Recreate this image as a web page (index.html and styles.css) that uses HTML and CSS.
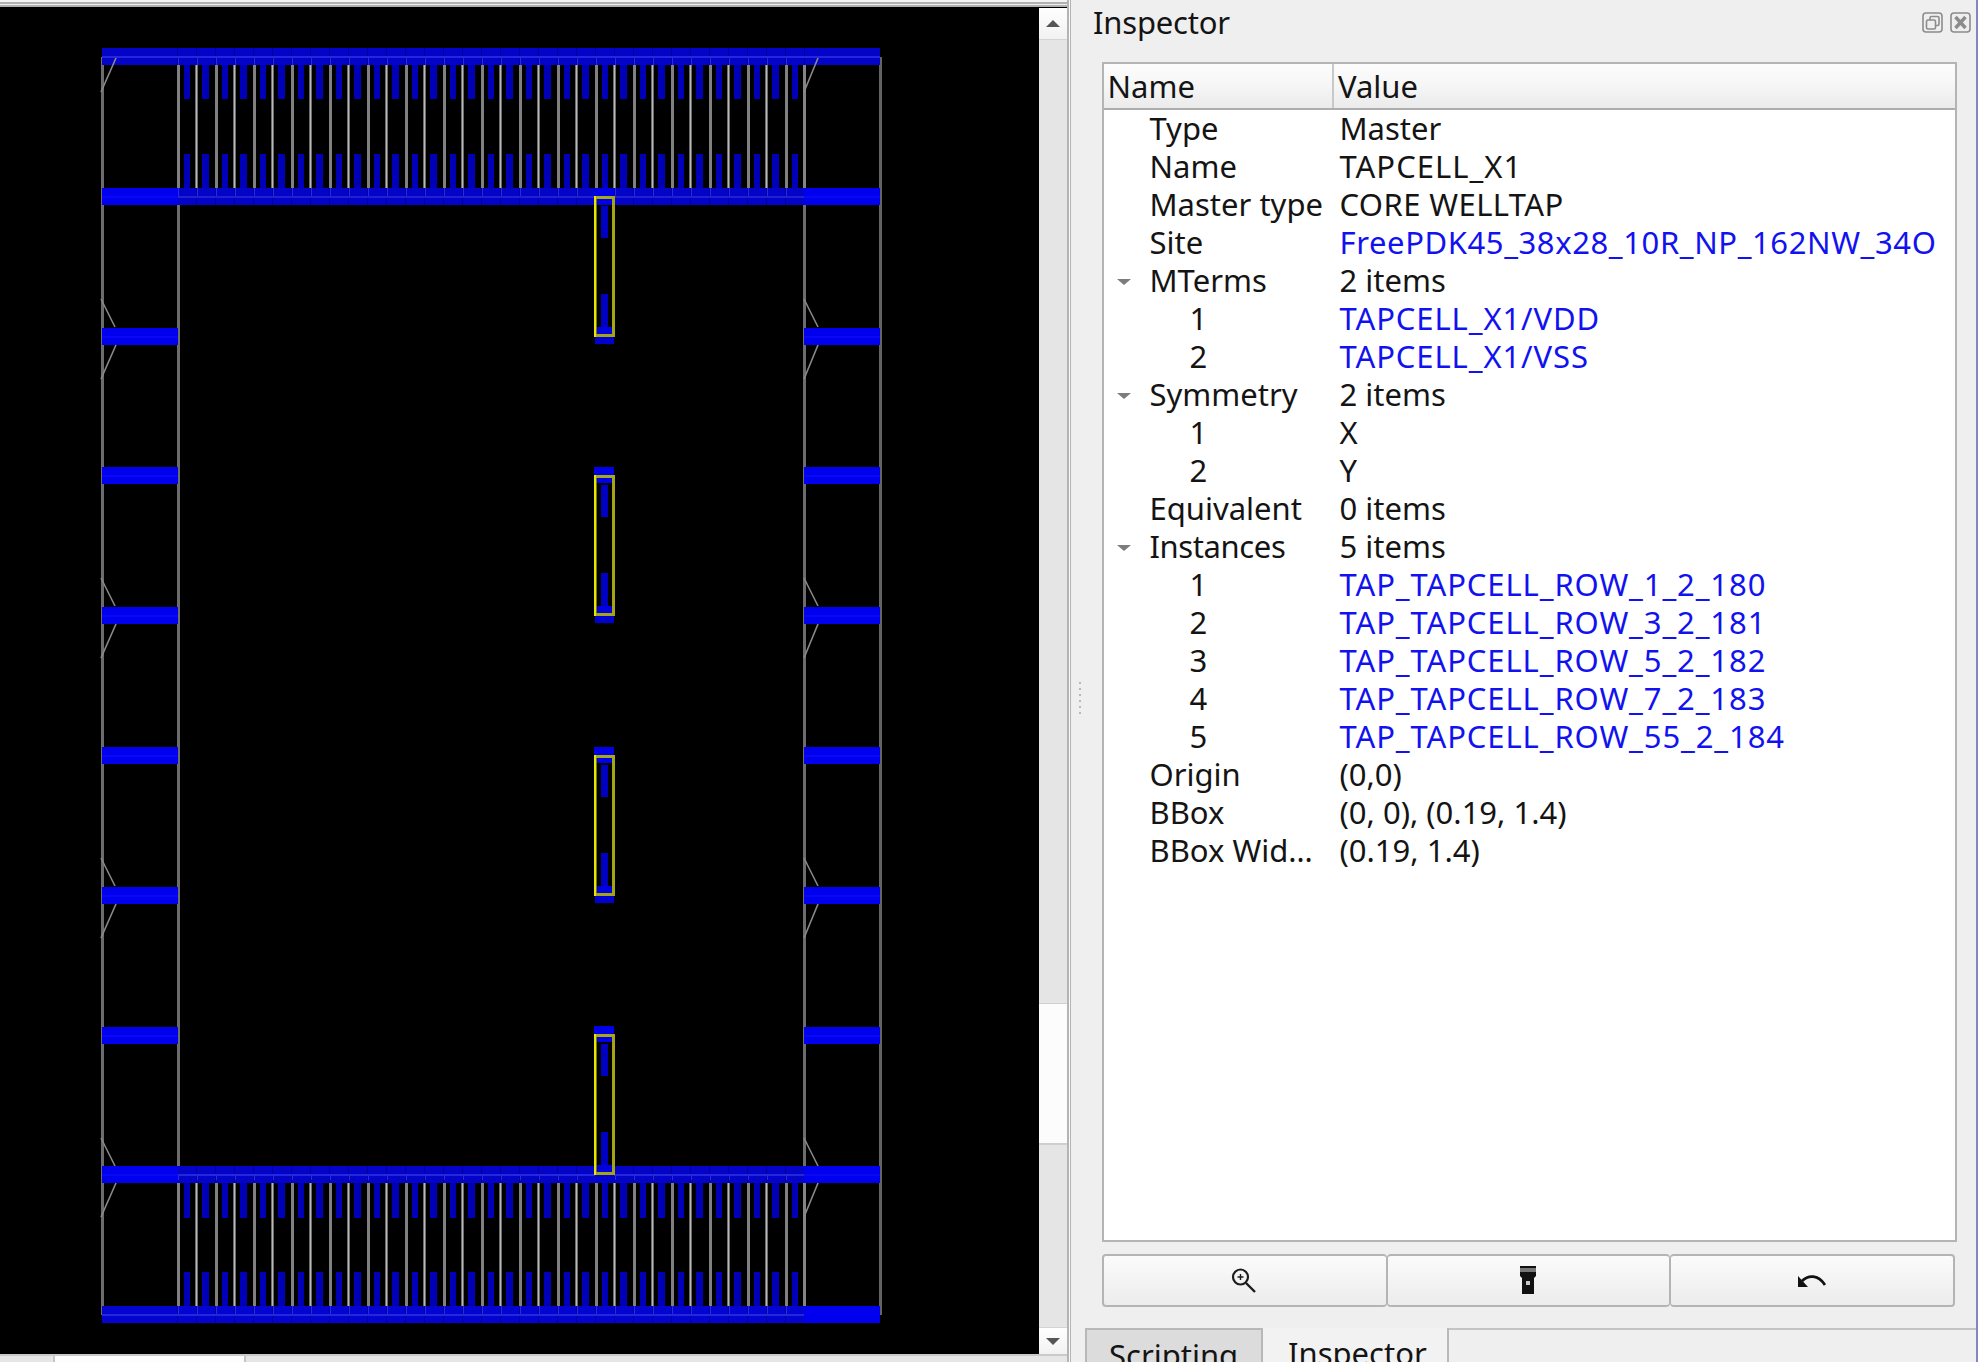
FILE: index.html
```html
<!DOCTYPE html>
<html lang="en">
<head>
<meta charset="utf-8">
<title>Inspector</title>
<link rel="stylesheet" href="styles.css">
</head>
<body>
<div class="app">
  <section class="layout-pane">
    <div class="layout-top">
      <svg class="layout" viewBox="0 0 1039 1346" width="1039" height="1346" shape-rendering="crispEdges">
        <defs>
          <pattern id="cellLines" patternUnits="userSpaceOnUse" x="177" y="0" width="38" height="10">
            <rect x="0" width="3" height="10" fill="#808080"/>
            <rect x="18" width="3" height="10" fill="#6c6c6c"/>
            <rect x="19" width="1" height="10" fill="#b8b8b8"/>
          </pattern>
          <pattern id="cellPins" patternUnits="userSpaceOnUse" x="184" y="0" width="38" height="10">
            <rect x="0" width="6" height="10" fill="#0000b8"/>
            <rect x="18" width="7" height="10" fill="#0000b8"/>
          </pattern>
          <pattern id="cellEdges" patternUnits="userSpaceOnUse" x="177" y="0" width="19" height="10">
            <rect x="0" width="1" height="10" fill="#0000a0"/>
          </pattern>
          <pattern id="cellMarks" patternUnits="userSpaceOnUse" x="178" y="0" width="19" height="10">
            <rect x="0" width="1" height="10" fill="#2a2ae0"/>
          </pattern>
          <g id="tapCell">
            <rect x="594" y="-8" width="20" height="16" fill="#0000e8"/>
            <rect x="601" y="10" width="7" height="32" fill="#0000c0"/>
            <rect x="601" y="98" width="7" height="33" fill="#0000c0"/>
            <rect x="597" y="131" width="15" height="8" fill="#0000e0"/>
            <rect x="595" y="140" width="19" height="8" fill="#0000d0"/>
            <rect x="594" y="0" width="3" height="141" fill="#74740a"/>
            <rect x="594" y="0" width="2" height="141" fill="#e6e600"/>
            <rect x="612" y="0" width="3" height="141" fill="#a4a414"/>
            <rect x="596" y="0" width="19" height="3" fill="#a8a814"/>
            <rect x="596" y="138" width="19" height="3" fill="#a4a414"/>
          </g>
          <g id="sideRail">
            <rect x="102" y="0" width="76" height="17" fill="#0000ee"/>
            <rect x="102" y="8" width="76" height="2" fill="#0808f4"/>
            <rect x="804" y="0" width="76" height="17" fill="#0000ee"/>
            <rect x="804" y="8" width="76" height="2" fill="#0808f4"/>
          </g>
          <g id="wingsAbove" stroke="#8a8a8a" stroke-width="1.6" shape-rendering="auto" fill="none">
            <path d="M101 -28L115 0"/>
            <path d="M804 -28L818 0"/>
          </g>
          <g id="wingsBelow" stroke="#8a8a8a" stroke-width="1.6" shape-rendering="auto" fill="none">
            <path d="M101 34L116 0"/>
            <path d="M804 34L818 0"/>
          </g>
        </defs>

        <rect x="101" y="49" width="3" height="1258" fill="#6c6c6c"/>
        <rect x="177" y="49" width="3" height="1258" fill="#6c6c6c"/>
        <rect x="803" y="49" width="3" height="1258" fill="#6c6c6c"/>
        <rect x="879" y="49" width="3" height="1258" fill="#626262"/>

        <rect x="177" y="49" width="628" height="140" fill="url(#cellLines)"/>
        <rect x="177" y="1167" width="628" height="140" fill="url(#cellLines)"/>
        <rect x="803" y="49" width="3" height="140" fill="#848484"/>
        <rect x="803" y="1167" width="3" height="140" fill="#848484"/>

        <rect x="184" y="57" width="615" height="34" fill="url(#cellPins)"/>
        <rect x="184" y="146" width="615" height="34" fill="url(#cellPins)"/>
        <rect x="184" y="1175" width="615" height="35" fill="url(#cellPins)"/>
        <rect x="184" y="1264" width="615" height="34" fill="url(#cellPins)"/>

        <rect x="102" y="40" width="778" height="17" fill="#0404c8"/>
        <rect x="177" y="40" width="628" height="17" fill="url(#cellEdges)"/>
        <rect x="177" y="48" width="628" height="9" fill="url(#cellMarks)"/>
        <rect x="102" y="48" width="778" height="2" fill="#2626dc"/>

        <rect x="177" y="180" width="628" height="17" fill="#0404c8"/>
        <rect x="177" y="180" width="628" height="17" fill="url(#cellEdges)"/>
        <rect x="177" y="180" width="628" height="9" fill="url(#cellMarks)"/>
        <rect x="177" y="188" width="628" height="2" fill="#2020d4"/>

        <rect x="177" y="1158" width="628" height="17" fill="#0404c8"/>
        <rect x="177" y="1158" width="628" height="17" fill="url(#cellEdges)"/>
        <rect x="177" y="1166" width="628" height="6" fill="url(#cellMarks)"/>
        <rect x="177" y="1166" width="628" height="2" fill="#2626dc"/>

        <rect x="102" y="1298" width="778" height="17" fill="#0404d0"/>
        <rect x="177" y="1298" width="628" height="17" fill="url(#cellEdges)"/>
        <rect x="177" y="1298" width="628" height="9" fill="url(#cellMarks)"/>
        <rect x="102" y="1306" width="702" height="2" fill="#2626dc"/>
        <rect x="804" y="1298" width="76" height="17" fill="#0000ee"/>

        <use href="#sideRail" y="180"/>
        <use href="#sideRail" y="320"/>
        <use href="#sideRail" y="459"/>
        <use href="#sideRail" y="599"/>
        <use href="#sideRail" y="739"/>
        <use href="#sideRail" y="879"/>
        <use href="#sideRail" y="1019"/>
        <use href="#sideRail" y="1158"/>

        <use href="#wingsBelow" y="50"/>
        <use href="#wingsAbove" y="319"/>
        <use href="#wingsBelow" y="337"/>
        <use href="#wingsAbove" y="598"/>
        <use href="#wingsBelow" y="616"/>
        <use href="#wingsAbove" y="878"/>
        <use href="#wingsBelow" y="896"/>
        <use href="#wingsAbove" y="1158"/>
        <use href="#wingsBelow" y="1175"/>

        <use href="#tapCell" y="188"/>
        <use href="#tapCell" y="467"/>
        <use href="#tapCell" y="747"/>
        <use href="#tapCell" y="1026"/>
      </svg>
      <div class="vscroll">
        <div class="sb-btn sb-btn-up"><span class="arrow-up"></span></div>
        <div class="sb-track">
          <div class="sb-handle"></div>
        </div>
        <div class="sb-btn sb-btn-down"><span class="arrow-down"></span></div>
      </div>
    </div>
    <div class="hscroll">
      <div class="hs-handle"></div>
    </div>
  </section>

  <div class="splitter">
    <span class="dot"></span><span class="dot"></span><span class="dot"></span>
    <span class="dot"></span><span class="dot"></span><span class="dot"></span>
  </div>

  <aside class="dock">
    <header class="dock-title">
      <span class="dock-name">Inspector</span>
      <span class="dock-icons">
        <svg width="21" height="21" viewBox="0 0 21 21" fill="none" stroke="#8c8c8c" stroke-width="1.6">
          <rect x="1" y="1" width="19" height="19" rx="3"/>
          <rect x="8" y="4.5" width="9" height="9" rx="1.5"/>
          <rect x="4.5" y="8" width="9" height="9" rx="1.5" fill="#efefef"/>
        </svg>
        <svg width="21" height="21" viewBox="0 0 21 21" fill="none" stroke="#8c8c8c">
          <rect x="1" y="1" width="19" height="19" rx="3" stroke-width="1.6"/>
          <path d="M5.5 5L15.5 16M15.5 5L5.5 16" stroke-width="3.4"/>
        </svg>
      </span>
    </header>

    <div class="tree">
      <div class="tree-head">
        <div class="th th-name">Name</div>
        <div class="th th-value">Value</div>
      </div>
      <div class="tree-body">
        <div class="row"><div class="cell-name">Type</div><div class="cell-value">Master</div></div>
        <div class="row"><div class="cell-name">Name</div><div class="cell-value spaced">TAPCELL_X1</div></div>
        <div class="row"><div class="cell-name">Master type</div><div class="cell-value spaced-less">CORE WELLTAP</div></div>
        <div class="row"><div class="cell-name">Site</div><div class="cell-value link site">FreePDK45_38x28_10R_NP_162NW_34O</div></div>
        <div class="row"><div class="cell-name"><span class="twist"></span>MTerms</div><div class="cell-value">2 items</div></div>
        <div class="row"><div class="cell-name child">1</div><div class="cell-value link">TAPCELL_X1/VDD</div></div>
        <div class="row"><div class="cell-name child">2</div><div class="cell-value link">TAPCELL_X1/VSS</div></div>
        <div class="row"><div class="cell-name"><span class="twist"></span>Symmetry</div><div class="cell-value">2 items</div></div>
        <div class="row"><div class="cell-name child">1</div><div class="cell-value">X</div></div>
        <div class="row"><div class="cell-name child">2</div><div class="cell-value">Y</div></div>
        <div class="row"><div class="cell-name">Equivalent</div><div class="cell-value">0 items</div></div>
        <div class="row"><div class="cell-name tight"><span class="twist"></span>Instances</div><div class="cell-value">5 items</div></div>
        <div class="row"><div class="cell-name child">1</div><div class="cell-value link">TAP_TAPCELL_ROW_1_2_180</div></div>
        <div class="row"><div class="cell-name child">2</div><div class="cell-value link">TAP_TAPCELL_ROW_3_2_181</div></div>
        <div class="row"><div class="cell-name child">3</div><div class="cell-value link">TAP_TAPCELL_ROW_5_2_182</div></div>
        <div class="row"><div class="cell-name child">4</div><div class="cell-value link">TAP_TAPCELL_ROW_7_2_183</div></div>
        <div class="row"><div class="cell-name child">5</div><div class="cell-value link">TAP_TAPCELL_ROW_55_2_184</div></div>
        <div class="row"><div class="cell-name">Origin</div><div class="cell-value">(0,0)</div></div>
        <div class="row"><div class="cell-name">BBox</div><div class="cell-value">(0, 0), (0.19, 1.4)</div></div>
        <div class="row"><div class="cell-name">BBox Wid…</div><div class="cell-value">(0.19, 1.4)</div></div>
      </div>
    </div>

    <div class="actions">
      <button class="action" type="button" aria-label="Zoom to">
        <svg class="icon-zoom" width="25" height="26" viewBox="0 0 25 26" fill="none" stroke="#1c1c1c">
          <circle cx="9.5" cy="10" r="7.5" stroke-width="2.2"/>
          <path d="M15 16L24 25" stroke-width="2.4"/>
          <path d="M6.5 10h6M9.5 7v6" stroke-width="1.4"/>
        </svg>
      </button>
      <button class="action" type="button" aria-label="Highlight">
        <svg class="icon-torch" width="16" height="28" viewBox="0 0 16 28">
          <rect x="0" y="0" width="16" height="2" fill="#111"/>
          <rect x="0" y="2" width="16" height="4" fill="#777"/>
          <path d="M0 6H16V10L14 12V28H2V12L0 10Z" fill="#111"/>
          <rect x="6" y="15" width="4" height="4" fill="#c8c8c8"/>
        </svg>
      </button>
      <button class="action" type="button" aria-label="Back">
        <svg class="icon-undo" width="28" height="14" viewBox="0 0 28 14" fill="none">
          <path d="M4 7C10 1 20 0 27 11" stroke="#111" stroke-width="2.8"/>
          <path d="M0 2L0 13L10 13Z" fill="#111"/>
        </svg>
      </button>
    </div>

    <div class="tabs">
      <div class="tab tab-off">Scripting</div>
      <div class="tab tab-on">Inspector</div>
      <div class="tab-rest"></div>
    </div>
  </aside>
</div>
</body>
</html>
```
FILE: styles.css
```css
* { box-sizing: border-box; }
html, body { margin: 0; height: 100%; background: #efefef; overflow: hidden; }
body { font-family: "Noto Sans", "Open Sans", sans-serif; font-size: 31px; color: #141414; }

.app { display: flex; width: 1978px; height: 1362px; overflow: hidden; border-right: 2px solid #8484c0; }

/* layout viewer */
.layout-pane {
  width: 1067px; flex: none; display: flex; flex-direction: column;
  border-top: 2px solid #f4f4f4;
  background: #f2f2f2;
}
.layout-top {
  flex: none; height: 1352px; display: flex;
  border-top: 2px solid #b0b0b0;
  padding-top: 1px;
  background: linear-gradient(#efefef 0 3px, #000 3px);
  position: relative;
}
.layout-top::before {
  content: ""; position: absolute; left: 0; right: 0; top: 1px; height: 2px; background: #b0b0b0;
}
.layout { display: block; flex: none; margin-top: 3px; background: #000; }
.vscroll { width: 28px; flex: none; display: flex; flex-direction: column; background: #e5e5e5; margin-top: 3px; height: 1346px; }
.sb-btn { flex: none; display: flex; align-items: center; justify-content: center; background: linear-gradient(#fefefe, #f2f2f2); }
.sb-btn-up { height: 32px; border-bottom: 1px solid #d4d4d4; }
.sb-btn-down { height: 27px; border-top: 1px solid #d4d4d4; }
.arrow-up, .arrow-down { width: 0; height: 0; border-left: 7px solid transparent; border-right: 7px solid transparent; }
.arrow-up { border-bottom: 7px solid #555; }
.arrow-down { border-top: 7px solid #555; }
.sb-track { flex: 1; display: flex; flex-direction: column; padding-top: 963px; }
.sb-handle { height: 142px; background: #fcfcfc; border-top: 1px solid #d0d0d0; border-bottom: 2px solid #cfcfcf; }

.hscroll { flex: none; height: 8px; background: #e6e6e6; border-top: 2px solid #cacaca; padding-left: 53px; }
.hs-handle { width: 193px; height: 6px; background: #fdfdfd; border-left: 2px solid #c4c4c4; border-right: 2px solid #c4c4c4; }

/* splitter */
.splitter {
  width: 35px; flex: none; display: flex; flex-direction: column; align-items: center; justify-content: center;
  gap: 4px; padding-right: 12px; padding-top: 34px;
  border-left: 2px solid #b4b4b4;
  background: #efefef;
  box-shadow: inset 1px 0 0 #fafafa, inset 2px 0 0 #b4b4b4;
}
.dot { width: 2px; height: 2px; background: #b8b8b8; }

/* dock */
.dock { flex: 1; min-width: 0; display: flex; flex-direction: column; background: #efefef; }
.dock-title { flex: none; height: 62px; display: flex; justify-content: space-between; padding-right: 5px; }
.dock-name { margin-left: -9px; line-height: 44px; letter-spacing: -0.2px; }
.dock-icons { display: flex; gap: 7px; padding-top: 12px; }

.tree {
  flex: none; width: 855px; height: 1180px; border: 2px solid #b4b4b4; background: #fff; display: flex; flex-direction: column;
}
.tree-head {
  flex: none; height: 46px; display: flex; line-height: 44px;
  background: linear-gradient(#fcfcfc, #f6f6f6 50%, #ebebeb);
  border-bottom: 2px solid #adadad;
}
.th { white-space: nowrap; }
.th-name { width: 230px; padding-left: 3.5px; border-right: 2px solid #c8c8c8; }
.th-value { flex: 1; padding-left: 4px; }
.tree-body { flex: 1; }
.row { height: 38px; display: flex; line-height: 36px; white-space: nowrap; }
.cell-name { width: 235.5px; padding-left: 45.5px; position: relative; flex: none; }
.cell-name.child { padding-left: 85.5px; }
.cell-name.tight { letter-spacing: -0.4px; }
.cell-value { flex: 1; }
.spaced { letter-spacing: 1px; }
.spaced-less { letter-spacing: 0.4px; }
.link { color: #1212f0; letter-spacing: 0.9px; }
.link.site { letter-spacing: 0.6px; }
.twist {
  position: absolute; left: 13px; top: 17px; width: 0; height: 0;
  border-left: 7px solid transparent; border-right: 7px solid transparent; border-top: 6px solid #7c7c7c;
}

.actions { flex: none; display: flex; width: 853px; height: 53px; margin-top: 12px; }
.action {
  flex: 1; padding: 0; height: 53px; display: flex; align-items: center; justify-content: center;
  border: 2px solid #b4b4b4; border-left-width: 1px; border-right-width: 1px; border-radius: 4px;
  background: linear-gradient(#fbfbfb, #ececec);
}
.action:first-child { border-left-width: 2px; }
.action:last-child { border-right-width: 2px; }
.icon-zoom { margin: -2px 3px 0 0; }
.icon-torch { margin: -2px 1px 0 0; }
.icon-undo { margin-right: 1px; }

.tabs { flex: none; display: flex; height: 34px; margin-top: 21px; margin-left: -17px; line-height: 1; }
.tab { flex: none; padding-top: 10px; overflow: hidden; white-space: nowrap; }
.tab-off { width: 178px; padding-left: 22px; background: #dcdcdc; border: 2px solid #b8b8b8; border-bottom: 0; }
.tab-on { width: 186px; padding-left: 25px; background: #f2f2f2; border-right: 2px solid #b8b8b8; }
.tab-rest { flex: 1; border-top: 2px solid #c4c4c4; }
```
